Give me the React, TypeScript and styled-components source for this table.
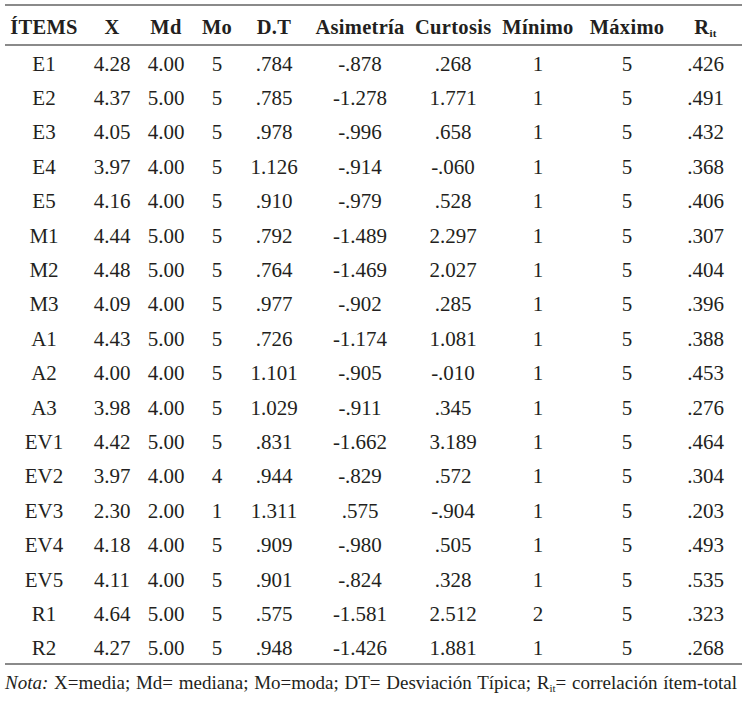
import styled, { createGlobalStyle } from 'styled-components';

const GlobalStyle = createGlobalStyle`
  html, body {
    margin: 0;
    padding: 0;
    background: #ffffff;
  }
  body {
    font-family: 'Liberation Serif', 'Times New Roman', serif;
    color: #231f20;
  }
`;

type Row = [string, string, string, string, string, string, string, string, string, string];

const rows: Row[] = [
  ['E1', '4.28', '4.00', '5', '.784', '-.878', '.268', '1', '5', '.426'],
  ['E2', '4.37', '5.00', '5', '.785', '-1.278', '1.771', '1', '5', '.491'],
  ['E3', '4.05', '4.00', '5', '.978', '-.996', '.658', '1', '5', '.432'],
  ['E4', '3.97', '4.00', '5', '1.126', '-.914', '-.060', '1', '5', '.368'],
  ['E5', '4.16', '4.00', '5', '.910', '-.979', '.528', '1', '5', '.406'],
  ['M1', '4.44', '5.00', '5', '.792', '-1.489', '2.297', '1', '5', '.307'],
  ['M2', '4.48', '5.00', '5', '.764', '-1.469', '2.027', '1', '5', '.404'],
  ['M3', '4.09', '4.00', '5', '.977', '-.902', '.285', '1', '5', '.396'],
  ['A1', '4.43', '5.00', '5', '.726', '-1.174', '1.081', '1', '5', '.388'],
  ['A2', '4.00', '4.00', '5', '1.101', '-.905', '-.010', '1', '5', '.453'],
  ['A3', '3.98', '4.00', '5', '1.029', '-.911', '.345', '1', '5', '.276'],
  ['EV1', '4.42', '5.00', '5', '.831', '-1.662', '3.189', '1', '5', '.464'],
  ['EV2', '3.97', '4.00', '4', '.944', '-.829', '.572', '1', '5', '.304'],
  ['EV3', '2.30', '2.00', '1', '1.311', '.575', '-.904', '1', '5', '.203'],
  ['EV4', '4.18', '4.00', '5', '.909', '-.980', '.505', '1', '5', '.493'],
  ['EV5', '4.11', '4.00', '5', '.901', '-.824', '.328', '1', '5', '.535'],
  ['R1', '4.64', '5.00', '5', '.575', '-1.581', '2.512', '2', '5', '.323'],
  ['R2', '4.27', '5.00', '5', '.948', '-1.426', '1.881', '1', '5', '.268'],
];

const colWidths = [78, 58, 50, 52, 62, 110, 76, 94, 84, 73];

const Page = styled.div`
  padding: 4px 6px 0 5px;
`;

const Table = styled.table`
  width: 737px;
  border-collapse: collapse;
  table-layout: fixed;
  border-top: 2px solid #8a8a8a;
  border-bottom: 2px solid #8a8a8a;
`;

const HeadRow = styled.tr`
  height: 40px;
  border-bottom: 2px solid #8a8a8a;
`;

const HeadCell = styled.th`
  padding: 5px 0 0;
  font-size: 20.5px;
  letter-spacing: 0.3px;
  font-weight: 700;
  text-align: center;
  white-space: nowrap;
  color: #231f20;
`;

const BodyRow = styled.tr`
  height: 34.4px;
`;

const Cell = styled.td`
  padding: 4px 0 0;
  font-size: 21px;
  text-align: center;
  white-space: nowrap;
`;

const Sub = styled.sub`
  font-size: 11px;
  vertical-align: -3px;
  line-height: 0;
`;

const Note = styled.p`
  margin: 7px 0 0;
  font-size: 19px;
  word-spacing: 1px;
  white-space: nowrap;
`;

const App = () => {
  const headers = ['ÍTEMS', 'X', 'Md', 'Mo', 'D.T', 'Asimetría', 'Curtosis', 'Mínimo', 'Máximo'];
  return (
    <>
      <GlobalStyle />
      <Page>
        <Table>
          <colgroup>
            {colWidths.map((w, i) => (
              <col key={i} style={{ width: w }} />
            ))}
          </colgroup>
          <thead>
            <HeadRow>
              {headers.map(h => (
                <HeadCell key={h}>{h}</HeadCell>
              ))}
              <HeadCell>
                R<Sub>it</Sub>
              </HeadCell>
            </HeadRow>
          </thead>
          <tbody>
            {rows.map(r => (
              <BodyRow key={r[0]}>
                {r.map((v, i) => (
                  <Cell key={i}>{v}</Cell>
                ))}
              </BodyRow>
            ))}
          </tbody>
        </Table>
        <Note>
          <i>Nota:</i> X=media; Md= mediana; Mo=moda; DT= Desviación Típica; R<Sub>it</Sub>= correlación ítem-total
        </Note>
      </Page>
    </>
  );
};

export default App;
